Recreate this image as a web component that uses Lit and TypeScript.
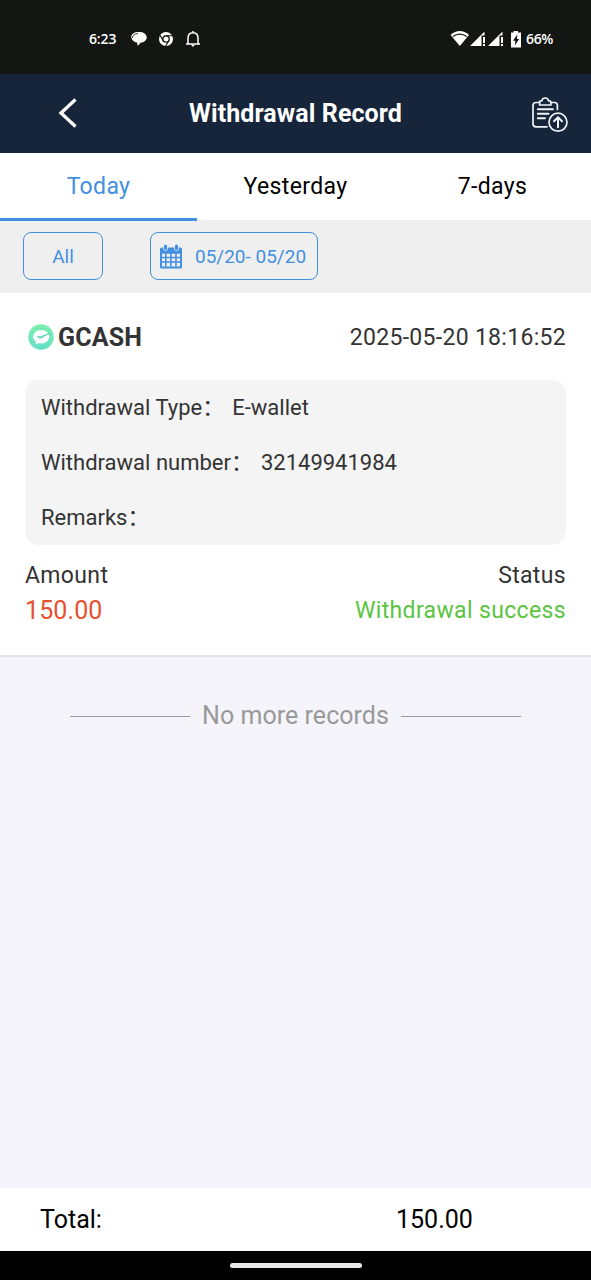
import { LitElement, html, css } from "lit";
import { customElement } from "lit/decorators.js";

@customElement("app-root")
export class AppRoot extends LitElement {
  static styles = css`
    :host { display: flex; flex-direction: column; height: 1280px; width: 591px; overflow: hidden;
      font-family: Roboto, "Noto Sans CJK SC", sans-serif; color: #333; background: #f4f4fa; }
    * { box-sizing: border-box; }
    svg { display: block; flex: none; }
    span { white-space: nowrap; }
    .status { height: 74px; flex: none; background: #141613; color: #fff; display: flex; align-items: center;
      padding: 3px 38px 0 89px; font: 500 14px/20px "Open Sans", sans-serif; }
    .clock { font-weight: 600; width: 42px; letter-spacing: -0.15px; }
    .left { display: flex; align-items: center; gap: 11px; flex: 1; }
    .right { display: flex; align-items: center; }
    .pct { font-weight: 600; letter-spacing: -0.4px; margin-left: 3px; }
    .battery { margin-left: 3px; }
    header { height: 79px; flex: none; background: #17253a; color: #fff; display: grid;
      grid-template-columns: 136px 1fr 136px; align-items: center; }
    .back { margin: -1px 0 0 58px; }
    .title { font-size: 25px; font-weight: 700; text-align: center; letter-spacing: 0.1px; }
    .upload { margin-left: 74px; }
    .tabs { height: 68px; flex: none; background: #fff; display: grid; grid-template-columns: repeat(3, 1fr);
      color: #000; font-size: 23px; line-height: 68px; text-align: center; border-bottom: 1px solid #efefef; }
    .tab { letter-spacing: 0.35px; height: 68px; }
    .active { color: #438fe0; border-bottom: 3px solid #438fe0; line-height: 67px; }
    .filters { height: 72px; flex: none; background: #efefef; display: flex; align-items: flex-start; padding: 11px 23px; gap: 47px; color: #438fe0; }
    .pill { height: 48px; border: 1.3px solid #438fe0; border-radius: 8px; display: flex; align-items: center; justify-content: center; font-size: 19px; }
    .all { width: 80px; }
    .date { width: 168px; justify-content: flex-start; padding-left: 9px; gap: 13px; }
    .record { height: 364px; flex: none; background: #fff; border-bottom: 2px solid #e5e5e8; padding: 0 25px; }
    .row { display: flex; justify-content: space-between; align-items: center; }
    .head { height: 87px; padding-top: 1px; }
    .brand { display: flex; align-items: center; gap: 4px; font-size: 25px; font-weight: 700; padding-left: 3px; letter-spacing: 0.15px; }
    .time { font-size: 23px; letter-spacing: 0.3px; }
    .details { height: 165px; background: #f4f4f4; border-radius: 14px; padding-left: 16px; font-size: 22px; }
    .detail { height: 55px; line-height: 55px; display: flex; gap: 8px; }
    .labels { height: 35px; font-size: 23px; margin-top: 13px; letter-spacing: 0.35px; }
    .values { height: 35px; }
    .amount { color: #e4512f; font-size: 25px; letter-spacing: 0.1px; }
    .success { color: #5bc43f; font-size: 23px; letter-spacing: 0.35px; }
    .end { flex: none; display: flex; justify-content: center; align-items: center;
      height: 116px; gap: 12px; font-size: 25px; color: #999; letter-spacing: 0.04px; }
    .rule { width: 120px; height: 1px; background: #999; margin-top: 2px; }
    .total { height: 63px; flex: none; margin-top: auto; background: #fff; color: #000; display: grid;
      grid-template-columns: 356px 1fr; padding-left: 40px; align-items: center; font-size: 25px; }
    .nav { height: 29px; flex: none; background: #000; display: flex; justify-content: center; }
    .handle { width: 132px; height: 5px; border-radius: 3px; background: #e6e6e6; margin-top: 12px; }
  `;

  signal() {
    return html`<svg width="18" height="16" viewBox="0 0 18 16" fill="#fff"><path d="M0 15 L14.5 0.5 V4.5 H11.5 V15Z"/><rect x="13" y="6" width="2" height="6"/><rect x="13" y="13" width="2" height="2"/></svg>`;
  }

  render() {
    return html`
      <div class="status">
        <span class="clock">6:23</span>
        <div class="left">
          <svg width="16" height="16" viewBox="0 0 16 16" fill="#fff"><path d="M8 1C3 1 0 3 .3 6.5C.6 9 3 11 6 11.6L6.8 15L9.5 11.8C13 11.5 15.7 9.4 15.7 6.6C15.7 3 12.5 1 8 1Z"/><path d="M1.4 7C1.5 4.3 3.5 2.7 7 2.5" fill="none" stroke="#141613" stroke-width=".8"/></svg>
          <svg width="16" height="16" viewBox="0 0 16 16"><circle cx="8" cy="8" r="7" fill="#fff"/><circle cx="8" cy="8" r="3.2" fill="#fff" stroke="#141613" stroke-width="1.3"/><path d="M8 4.8H14.4M5.2 9.6L2 4.2M10.8 9.6L7.6 15" stroke="#141613" stroke-width="1.1"/></svg>
          <svg width="16" height="18" viewBox="0 0 16 18" fill="none" stroke="#fff" stroke-width="1.5"><path d="M1 14H15M3 14V8C3 4.5 5 2.7 8 2.7S13 4.5 13 8V14M8 1V3"/><path d="M6 14.8H10L8 17Z" fill="#fff" stroke="none"/></svg>
        </div>
        <div class="right">
          <svg width="20" height="17" viewBox="0 0 20 17"><path d="M.6 5C6-.2 13.6-.2 19 5L9.8 16Z" fill="#fff"/><path d="M2.8 6.6C7.2 3.4 12.3 3.4 16.8 6.6" fill="none" stroke="#141613" stroke-width="1.2"/></svg>
          ${this.signal()}${this.signal()}
          <svg class="battery" width="14" height="18" viewBox="0 0 14 18"><path d="M4.5 1H9V2.5H12V17.5H2V2.5H4.5Z" fill="#fff"/><path d="M8.3 4.5L4 10.7H6.3L5.8 15.5L10.2 9H7.9Z" fill="#141613"/></svg>
          <span class="pct">66%</span>
        </div>
      </div>
      <header>
        <svg class="back" width="20" height="32" viewBox="0 0 20 32" fill="none" stroke="#fff" stroke-width="3.3"><path d="M17.5 2.5L3 16L17.5 29.5"/></svg>
        <span class="title">Withdrawal Record</span>
        <svg class="upload" width="40" height="38" viewBox="0 0 40 38" fill="none" stroke="#eef3f8" stroke-width="1.7" stroke-linecap="round" stroke-linejoin="round"><path d="M18 31.8H7Q4 31.8 4 28.8V10.5Q4 7.5 7 7.5H10M22.5 7.5H25.4Q28.4 7.5 28.4 10.5V14.5"/><path d="M10.6 10V7.4Q10.6 5.8 12.2 5.8H12.8Q13.4 3 16.2 3T19.6 5.8H20.3Q21.9 5.8 21.9 7.4V10Z"/><path d="M8.8 14.2H24M8.8 18.8H19.5M8.8 23.3H16" stroke-width="1.9"/><circle cx="29" cy="27.2" r="9"/><path d="M29 32.3V22.3M25 26.2L29 22.2L33 26.2" stroke-width="2"/></svg>
      </header>
      <nav class="tabs">
        <span class="tab active">Today</span><span class="tab">Yesterday</span><span class="tab">7-days</span>
      </nav>
      <div class="filters">
        <div class="pill all"><span>All</span></div>
        <div class="pill date">
          <svg width="22" height="25" viewBox="0 0 22 25"><rect x="0" y="3.5" width="22" height="21" rx="1.5" fill="#438fe0"/><rect x="2" y="9.8" width="18" height="12.7" fill="#efefef"/><path d="M2 13.5H20M2 18H20M5.8 9.5V22.5M10.9 9.5V22.5M16 9.5V22.5" stroke="#438fe0" stroke-width="1.6"/><path d="M5.5 2.5V4.5M16.5 2.5V4.5" stroke="#efefef" stroke-width="4.6" stroke-linecap="round"/><path d="M5.5 2V4.5M16.5 2V4.5" stroke="#438fe0" stroke-width="3" stroke-linecap="round"/></svg>
          <span>05/20- 05/20</span>
        </div>
      </div>
      <section class="record">
        <div class="row head">
          <div class="brand">
            <svg width="26" height="26" viewBox="0 0 26 26"><defs><linearGradient id="g" x1="0" y1="0" x2="0" y2="1"><stop offset="0" stop-color="#79efab"/><stop offset="1" stop-color="#66dfc6"/></linearGradient></defs><circle cx="13" cy="13" r="12.7" fill="url(#g)"/><ellipse cx="13.2" cy="12.8" rx="8.2" ry="6.8" fill="#fff"/><path d="M8 18L7.5 20.5L11 19Z" fill="#fff"/><path d="M9 12L12 14.5L21.5 9.3L12 13Z" fill="#65d9b4" stroke="#65d9b4" stroke-width=".9"/></svg>
            <span>GCASH</span>
          </div>
          <span class="time">2025-05-20 18:16:52</span>
        </div>
        <div class="details">
          <div class="detail"><span>Withdrawal Type：</span><span>E-wallet</span></div>
          <div class="detail"><span>Withdrawal number：</span><span>32149941984</span></div>
          <div class="detail"><span>Remarks：</span></div>
        </div>
        <div class="row labels"><span>Amount</span><span>Status</span></div>
        <div class="row values"><span class="amount">150.00</span><span class="success">Withdrawal success</span></div>
      </section>
      <div class="end"><i class="rule"></i><span>No more records</span><i class="rule"></i></div>
      <footer class="total"><span>Total:</span><span>150.00</span></footer>
      <div class="nav"><div class="handle"></div></div>
    `;
  }
}
